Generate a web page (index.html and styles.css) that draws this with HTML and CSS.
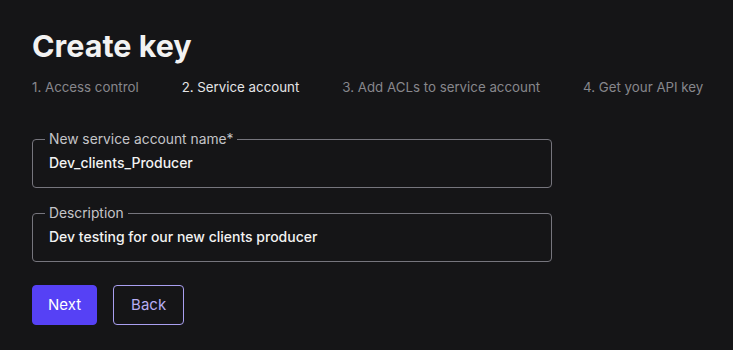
FILE: index.html
```html
<!DOCTYPE html>
<html lang="en">
<head>
<meta charset="utf-8">
<title>Create key</title>
<link rel="stylesheet" href="styles.css">
</head>
<body>
<main class="page">
  <h1 class="title">Create key</h1>
  <ol class="steps">
    <li class="step">1. Access control</li>
    <li class="step step-active">2. Service account</li>
    <li class="step">3. Add ACLs to service account</li>
    <li class="step">4. Get your API key</li>
  </ol>
  <form class="form">
    <fieldset class="field">
      <legend class="field-label">New service account name*</legend>
      <input class="field-input" type="text" value="Dev_clients_Producer">
    </fieldset>
    <fieldset class="field">
      <legend class="field-label">Description</legend>
      <input class="field-input" type="text" value="Dev testing for our new clients producer">
    </fieldset>
    <div class="actions">
      <button type="button" class="btn btn-primary">Next</button>
      <button type="button" class="btn btn-outline">Back</button>
    </div>
  </form>
</main>
</body>
</html>
```
FILE: styles.css
```css
html, body {
  margin: 0;
  padding: 0;
  background: #151517;
  height: 100%;
}
body {
  font-family: Inter, "Noto Sans", "Liberation Sans", sans-serif;
  color: #eeeeee;
}
.page {
  padding: 28px 32px 0 32px;
}
.title {
  margin: 0;
  font-size: 30.5px;
  line-height: 36px;
  font-weight: 700;
  color: #f2f2f2;
}
.steps {
  list-style: none;
  margin: 13px 0 0 0;
  padding: 0;
  display: flex;
  gap: 43px;
  font-size: 13.3px;
  line-height: 20px;
}
.step {
  color: #87878c;
  white-space: nowrap;
}
.step-active {
  color: #e4e4e6;
}
.form {
  margin-top: 33px;
  display: flex;
  flex-direction: column;
  width: 520px;
}
.field {
  margin: 0 0 16px 0;
  padding: 0 16px 14px 16px;
  border: 1px solid #76757d;
  border-radius: 4px;
  min-width: 0;
}
.field-label {
  padding: 0 4px;
  margin-left: -4px;
  font-size: 13.8px;
  line-height: 18px;
  color: #c4c4c8;
}
.field-input {
  display: block;
  width: 100%;
  box-sizing: border-box;
  margin: 5px 0 0 0;
  padding: 0;
  border: 0;
  outline: none;
  background: transparent;
  font-family: inherit;
  font-size: 14px;
  line-height: 20px;
  height: 20px;
  font-weight: 500;
  color: #f2f2f2;
}
.actions {
  display: flex;
  gap: 16px;
  margin-top: 7px;
}
.btn {
  font-family: inherit;
  font-size: 15px;
  line-height: 20px;
  height: 40px;
  border-radius: 4px;
  cursor: pointer;
}
.btn-primary {
  background: #5641f5;
  border: 1px solid #5641f5;
  color: #ffffff;
  padding: 0 15px;
}
.btn-outline {
  background: transparent;
  border: 1px solid #a99ff0;
  color: #b6adf2;
  padding: 0 17px;
}
```
